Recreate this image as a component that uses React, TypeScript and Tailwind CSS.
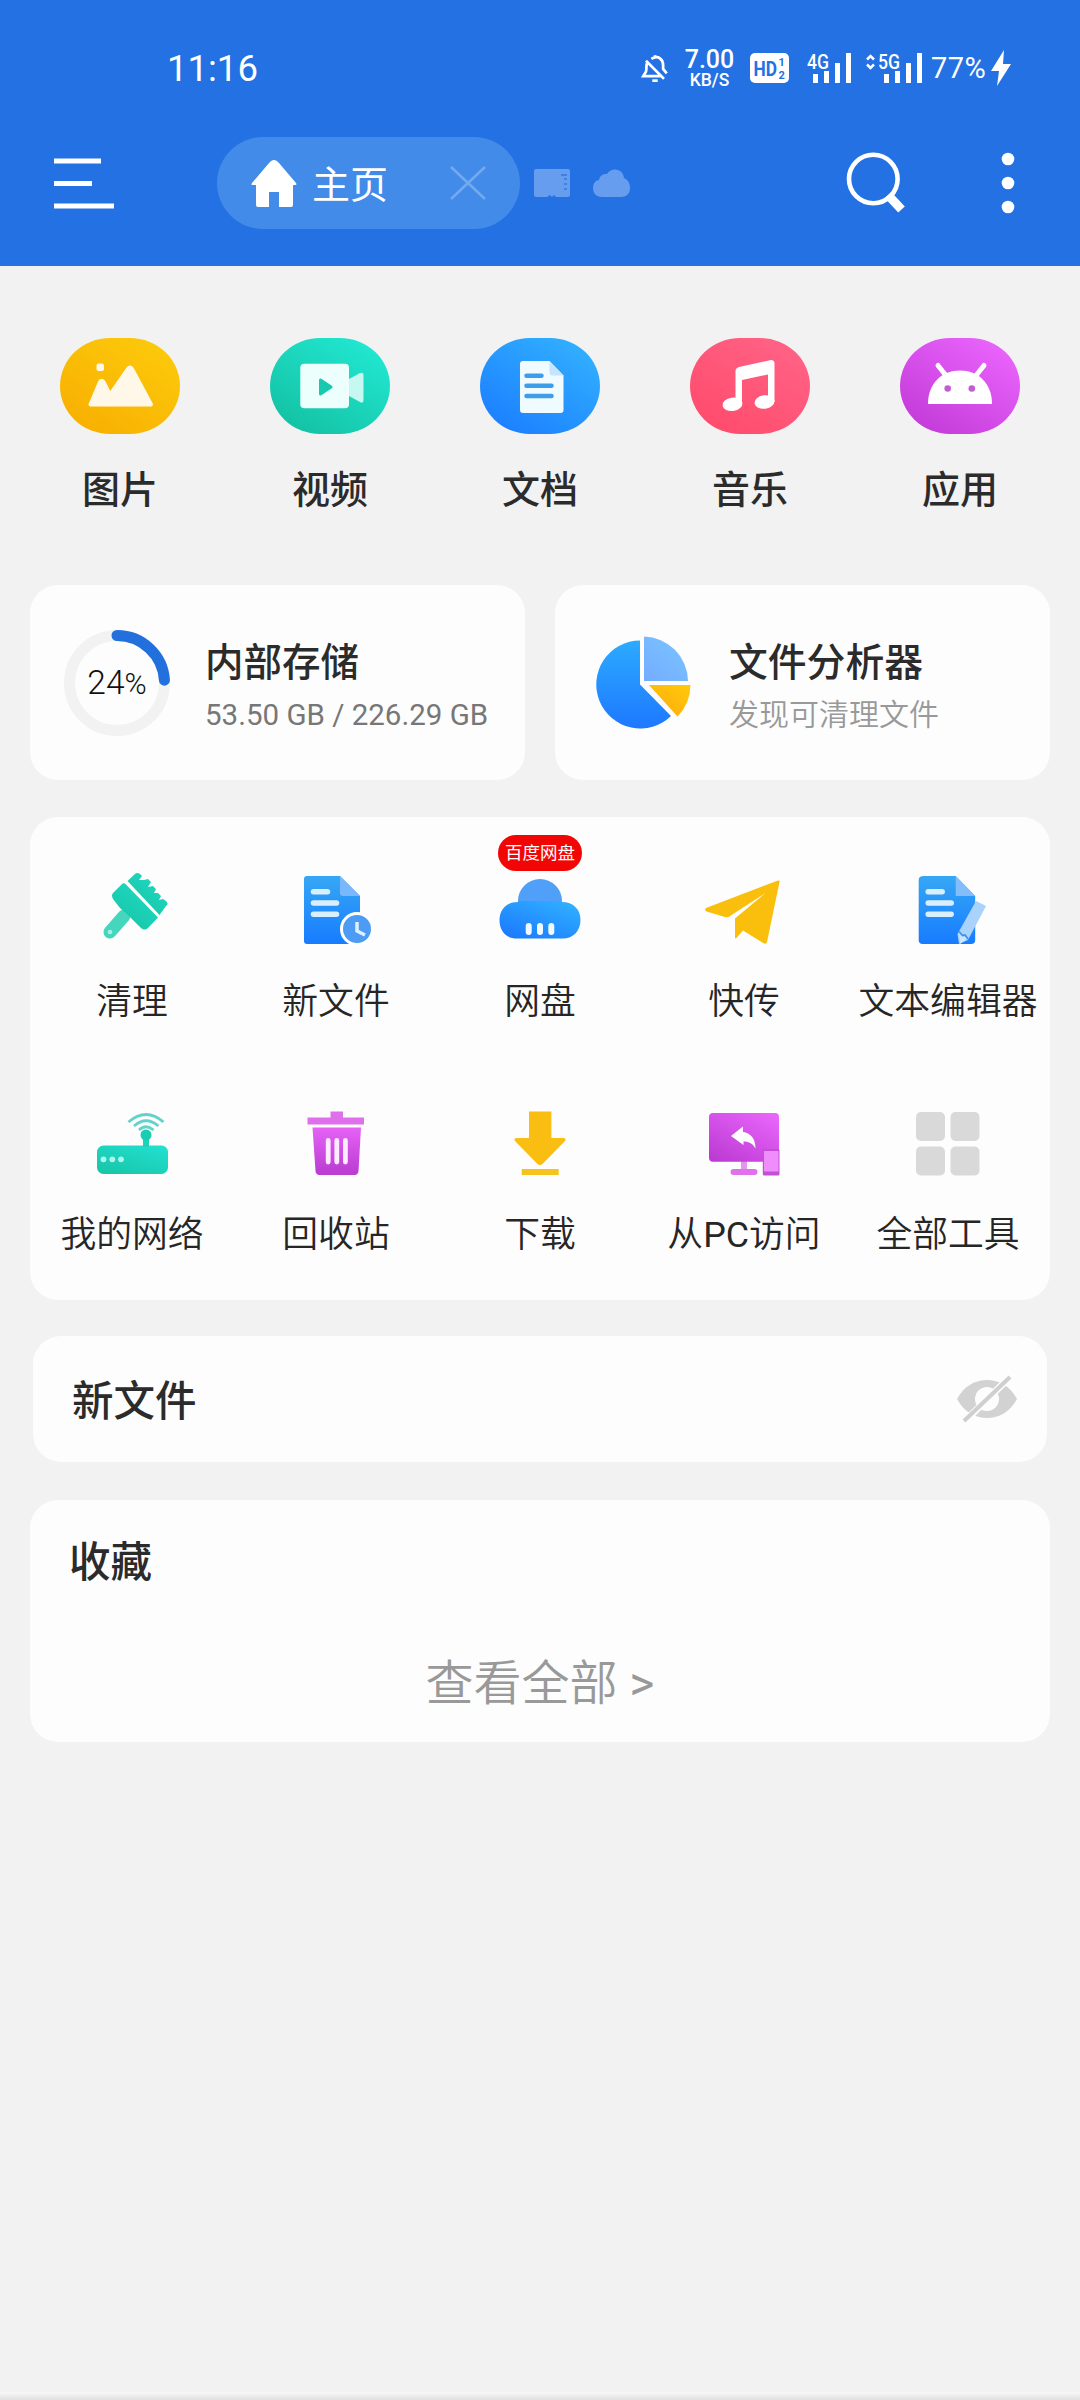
import type { ReactNode } from 'react';
import clsx from 'clsx';

function Gradient({ id, from, to, vertical }: { id: string; from: string; to: string; vertical?: boolean }) {
  return (
    <linearGradient id={id} x1={vertical ? '0.5' : '0.1'} y1={vertical ? '0' : '1'} x2={vertical ? '0.5' : '0.9'} y2={vertical ? '1' : '0'}>
      <stop offset="0" stopColor={from} />
      <stop offset="1" stopColor={to} />
    </linearGradient>
  );
}

function Bars({ x }: { x: number }) {
  return (
    <g fill="#fff">
      <rect x={x} y="24" width="5" height="9" />
      <rect x={x + 11} y="21" width="5" height="12" />
      <rect x={x + 22} y="13" width="5" height="20" />
      <rect x={x + 33} y="3" width="5" height="30" />
    </g>
  );
}

function StatusBar() {
  return (
    <div className="flex h-[136px] items-start pt-[50px] text-white">
      <div className="ml-[167px] w-[120px] text-[36.500px] leading-[37px]">11:16</div>
      <div className="ml-[354px] flex h-9 items-center">
        <svg width="28" height="32" viewBox="-1.500 -1.500 31 35" fill="none" stroke="#fff" strokeWidth="3">
          <path d="M10 6c8-5 13 1 13 7v4l4 5M14 5V2M4 8l20 20M5 11c-1 3 0 6-1 9l-3 5h21" />
          <path d="M11 30h6" />
        </svg>
        <div className="ml-[15px] w-[51px] pt-[3px] text-center font-medium">
          <div className="text-[25px] leading-[20px]">7.00</div>
          <div className="text-[17.500px] leading-[20px]">KB/S</div>
        </div>
        <svg className="ml-[15px]" width="39" height="30" viewBox="0 0 39 30">
          <rect width="39" height="30" rx="5" fill="#fff" />
          <g fill="#2371e3" fontWeight="700">
            <text x="3.500" y="22.500" fontSize="20" textLength="23.500" lengthAdjust="spacingAndGlyphs">HD</text>
            <text x="28.500" y="13" fontSize="11">1</text>
            <text x="28.500" y="26" fontSize="11">2</text>
          </g>
        </svg>
        <svg className="ml-[17px]" width="46" height="36" viewBox="0 0 46 36">
          <text x="1" y="19" fontSize="20.500" fontWeight="500" fill="#fff" textLength="22" lengthAdjust="spacingAndGlyphs">4G</text>
          <Bars x={7} />
        </svg>
        <svg className="ml-[13px]" width="58" height="36" viewBox="0 0 58 36">
          <path d="M2 9.500L5.500 6 9 9.500M2 14.500L5.500 18 9 14.500" fill="none" stroke="#fff" strokeWidth="2.500" />
          <text x="13" y="19" fontSize="20.500" fontWeight="500" fill="#fff" textLength="22" lengthAdjust="spacingAndGlyphs">5G</text>
          <Bars x={19} />
        </svg>
        <div className="ml-2 w-14 text-[29px] leading-9 tracking-[0.4px]">77%</div>
        <svg className="ml-1" width="20" height="36" viewBox="0 0 20 36">
          <path d="M13 0L0 21h8L6 36 20 14h-8z" fill="#fff" />
        </svg>
      </div>
    </div>
  );
}

function Toolbar() {
  return (
    <div className="flex h-[94px] items-center">
      <svg className="ml-[53px]" width="62" height="52" viewBox="0 0 62 52" stroke="#fff" strokeWidth="4.800">
        <path d="M1 4h47M1 26.500h38M1 49h60" />
      </svg>
      <div className="ml-[102px] flex h-[92px] w-[303px] items-center rounded-full bg-[#438be9]">
        <svg className="ml-[34px]" width="46" height="47" viewBox="0 0 46 47" fill="#fff">
          <path d="M23 0c2 0 3 1 5 3l17 20c1 2 0 2-1 2h-2v20q0 2-2 2H28V32H18v15H7q-2 0-2-2V25H2c-1 0-2 0-1-2L18 3c2-2 3-3 5-3z" />
        </svg>
        <span className="ml-[15px] pt-[3px] text-[38px] leading-[46px] text-white">主页</span>
        <svg className="ml-[62px]" width="36" height="34" viewBox="0 0 36 34" stroke="#73a9f0" strokeWidth="2.600">
          <path d="M1 1l34 32M35 1L1 33" />
        </svg>
      </div>
      <svg className="ml-[13px]" width="38" height="30" viewBox="0 0 38 30">
        <path d="M3 1h32q2 0 2 2v24q0 2-2 2H23l-2-2-2 2-2-2-3 2H3q-2 0-2-2V3q0-2 2-2z" fill="#669dee" />
        <path d="M28 7h6M31 11h3M31 16h3M31 21h3" stroke="#3f82e4" strokeWidth="2.200" />
      </svg>
      <svg className="ml-[21px]" width="38" height="30" viewBox="0 0 38 30">
        <path d="M10 29C4 29 1 25 1 20c0-5 3-8 6-8C8 7 11 6 15 6c4-7 16-6 17 4 4 2 6 5 6 10 0 6-4 9-9 9z" fill="#669dee" />
      </svg>
      <svg className="ml-[216px]" width="62" height="62" viewBox="0 0 62 62" fill="none" stroke="#fff">
        <circle cx="27.300" cy="27" r="24.300" strokeWidth="4.600" />
        <path d="M42 43L55.500 57.500" strokeWidth="9" />
      </svg>
      <svg className="ml-[93px]" width="14" height="62" viewBox="0 0 14 62" fill="#fff">
        <circle cx="7" cy="7" r="6.300" />
        <circle cx="7" cy="31" r="6.300" />
        <circle cx="7" cy="55" r="6.300" />
      </svg>
    </div>
  );
}

const categories: { name: string; from: string; to: string; icon: ReactNode }[] = [
  {
    name: '图片',
    from: '#f8ae00',
    to: '#fccb0c',
    icon: (
      <g fill="#fff8e8" stroke="#fff8e8" strokeWidth="4" strokeLinejoin="round">
        <rect x="38.500" y="27.500" width="3.500" height="3.500" />
        <path d="M30.500 66.500L40 44q1.500-2.500 3.500 0L50 57 68 31q2-3 4 0l19 35.500z" />
      </g>
    ),
  },
  {
    name: '视频',
    from: '#13bfa0',
    to: '#22ead5',
    icon: (
      <>
        <path d="M79 41l11-6q3.500-1 3.500 2v25q0 4-3.500 2l-11-6z" fill="#c5f8f1" />
        <rect x="30.300" y="25.700" width="48.700" height="44.500" rx="4" fill="#edfffd" />
        <path d="M50.500 42v14l10.500-7z" fill="#17c9ae" stroke="#17c9ae" strokeWidth="3" strokeLinejoin="round" />
      </>
    ),
  },
  {
    name: '文档',
    from: '#1a7cff',
    to: '#33b3ff',
    icon: (
      <>
        <path d="M43 23h26.500l14 14.500V72q0 3-3 3H43q-3 0-3-3V26q0-3 3-3z" fill="#f0fbff" />
        <path d="M69.500 23l14 14.500h-11q-3 0-3-3z" fill="#c4e4ff" />
        <path d="M46.500 37.700h15M46.500 47.800h25M46.500 58h25" stroke="#3d9de8" strokeWidth="4.500" strokeLinecap="round" />
      </>
    ),
  },
  {
    name: '音乐',
    from: '#ff4a6a',
    to: '#ff6488',
    icon: (
      <g fill="#fff">
        <path d="M49 29l32-7q3.500 0 3.500 3.500V64H78V36.500L52 42v24h-6.500V33q0-3 3.500-4z" />
        <ellipse cx="42.500" cy="66.300" rx="10" ry="6.700" transform="rotate(-8 42.500 66.300)" />
        <ellipse cx="74.500" cy="64" rx="10" ry="6.700" transform="rotate(-8 74.500 64)" />
      </g>
    ),
  },
  {
    name: '应用',
    from: '#c139d6',
    to: '#ec66ff',
    icon: (
      <>
        <path d="M28 66c0-21 14-33.500 32-33.500S92 45 92 66z" fill="#fff" />
        <path d="M38 27.500l8 10M84 27.500l-8 10" stroke="#fff" strokeWidth="5" strokeLinecap="round" />
        <circle cx="47.700" cy="50.500" r="3.300" fill="#c45cd4" />
        <circle cx="71.800" cy="50.500" r="3.300" fill="#c45cd4" />
      </>
    ),
  },
];

function DocLines() {
  return (
    <path d="M25.500 29.700h14M25.500 41h23M25.500 52.300h23" stroke="#d9efff" strokeWidth="5.500" strokeLinecap="round" />
  );
}

const tools: { name: string; label?: ReactNode; badge?: string; icon: ReactNode }[] = [
  {
    name: '清理',
    icon: (
      <>
        <Gradient id="brush" from="#18c2a5" to="#1fdcc4" />
        <path d="M40 54L26 70" stroke="#45d6be" strokeWidth="13" strokeLinecap="round" />
        <path d="M38 22q2-1.500 4 .5l32 33-10 10.500q-3.500 3-7 0L50 59l-6-6-8-7-7-9q-2-4 0-6z" fill="url(#brush)" />
        <path d="M43.500 19l7.500-7q2-2 5 0l2 2-3 4 5 0 4-1 3 3-3 5 5-1 3 3-2 4 4 0 3 3-2 4 4-1 3 2q3 3 0 5l-6.500 9z" fill="url(#brush)" />
        <circle cx="26" cy="70" r="2.300" fill="#a6efe2" />
      </>
    ),
  },
  {
    name: '新文件',
    icon: (
      <>
        <Gradient id="recent" from="#36a7f5" to="#177cff" vertical />
        <path d="M19 14h33l20 20v48H19q-3 0-3-3V17q0-3 3-3z" fill="url(#recent)" />
        <path d="M52 14l20 20H55q-3 0-3-3z" fill="#79b8fa" />
        <DocLines />
        <circle cx="69" cy="67" r="15.500" fill="#4c9bf5" stroke="#fff" strokeWidth="3" />
        <path d="M69 60v9l8 4" fill="none" stroke="#dff1ff" strokeWidth="3.500" />
      </>
    ),
  },
  {
    name: '网盘',
    badge: '百度网盘',
    icon: (
      <>
        <Gradient id="cloud" from="#1b78ff" to="#30b2ff" />
        <circle cx="48" cy="39" r="22" fill="#509ff8" />
        <path d="M26 39h44v1c11 0 18.500 7 18.500 18S81 76.500 71 76.500H25C14 76.500 7.500 69 7.500 58S15 40 26 40z" fill="url(#cloud)" />
        <path d="M36.700 64v6M48 64v6M59.300 64v6" stroke="#effaff" strokeWidth="6" strokeLinecap="round" />
      </>
    ),
  },
  {
    name: '快传',
    icon: (
      <path
        d="M10 46L82 18.500q2-.5 1.500 1.500L71 80q-.8 2.500-3 1.500L47 68.500 40 76.500q-1 0-1-1V56.500L69.500 31 34 54q-2 2-5 1L10.500 49.500q-2.500-1.500-.5-3.500z"
        fill="#fabf0c"
      />
    ),
  },
  {
    name: '文本编辑器',
    icon: (
      <>
        <Gradient id="editor" from="#36a7f5" to="#177cff" vertical />
        <g transform="translate(2.700 0)">
          <path d="M21 14h32l19.500 20v44q0 4-4 4H20q-4 0-4-4V18q0-4 5-4z" fill="url(#editor)" />
          <path d="M53 14l19.500 20H53z" fill="#84bdfb" />
          <DocLines />
        </g>
        <path d="M76 39l10 5-18 34-9 4-1.500-10z" fill="#a9d2fc" />
        <path d="M59 70l9 6-8 6z" fill="#cde5fd" />
        <path d="M59 69.500l3.500 4 2.500-.5 3 4" fill="none" stroke="#3f93ee" strokeWidth="1.800" />
      </>
    ),
  },
  {
    name: '我的网络',
    icon: (
      <>
        <Gradient id="router" from="#18c5a8" to="#22e0d0" />
        <rect x="13" y="50.500" width="71" height="28.500" rx="6.500" fill="url(#router)" />
        <path d="M62 40v12" stroke="#1fd3bb" strokeWidth="6" />
        <circle cx="62" cy="40" r="5.500" fill="#17cdb2" />
        <g fill="none" stroke="#62d3ca" strokeWidth="2.800">
          <path d="M44.500 27q17.500-15 35 0M50 31q12-10.500 24.500 0M55 35q7-6.500 14.500 0" />
        </g>
        <g fill="#aef5ec">
          <circle cx="19.500" cy="64.300" r="2.900" />
          <circle cx="28.300" cy="64.300" r="2.900" />
          <circle cx="37" cy="64.300" r="2.900" />
        </g>
      </>
    ),
  },
  {
    name: '回收站',
    icon: (
      <>
        <Gradient id="trash" from="#e662f7" to="#b93bcf" vertical />
        <path d="M42.500 16.500H55v6h21v7H19.500v-7h23z" fill="#df70ec" />
        <path d="M24.500 32.500H73L70.500 76q-.5 4-4 4h-35q-3.500 0-4-4z" fill="url(#trash)" />
        <path d="M40.200 45.500v21.500M48.800 45.500v21.500M57.400 45.500v21.500" stroke="#fdebff" strokeWidth="4.800" strokeLinecap="round" />
      </>
    ),
  },
  {
    name: '下载',
    icon: (
      <>
        <path d="M37 16.500h22.400V43H72q2.500.5 1 3L51 68.500q-3 3-6 0L23 46q-1.500-2.500 1-3h13z" fill="#fabe12" />
        <path d="M29.700 77h37" stroke="#f6c21c" strokeWidth="6" />
      </>
    ),
  },
  {
    name: '从PC访问',
    label: (
      <>
        从<span className="font-normal">PC</span>访问
      </>
    ),
    icon: (
      <>
        <Gradient id="screen" from="#bb3ad2" to="#e966fb" />
        <path d="M48 66v10" stroke="#e495ee" strokeWidth="6" />
        <rect x="34.500" y="74" width="27" height="6" rx="3" fill="#df72ec" />
        <rect x="13" y="18" width="70" height="48.700" rx="4" fill="url(#screen)" />
        <path d="M35 41l12-9.500v5.500c8 1 12.500 7 12.500 16.500-3-5-6-7-12-7v3.500z" fill="#fff" />
        <rect x="66.800" y="54" width="16.700" height="26.500" rx="1.500" fill="#c44fd6" />
        <rect x="68" y="56" width="14.500" height="20.500" fill="#ef8dfb" />
      </>
    ),
  },
  {
    name: '全部工具',
    icon: (
      <g fill="#d9d9d9">
        <rect x="16" y="17" width="29" height="29" rx="5" />
        <rect x="50.500" y="17" width="29" height="29" rx="5" />
        <rect x="16" y="51.500" width="29" height="29" rx="5" />
        <rect x="50.500" y="51.500" width="29" height="29" rx="5" />
      </g>
    ),
  },
];

function Card({ className, children }: { className?: string; children: ReactNode }) {
  return <section className={clsx('rounded-[28px] bg-[#fdfdfd]', className)}>{children}</section>;
}

function StorageCard() {
  const length = 2 * Math.PI * 47.5;

  return (
    <Card className="flex h-[195px] items-center pl-[34px]">
      <div className="relative size-[106px]">
        <svg width="106" height="106" viewBox="0 0 106 106" fill="none" strokeWidth="11">
          <circle cx="53" cy="53" r="47.500" stroke="#f2f2f2" />
          <circle
            cx="53"
            cy="53"
            r="47.500"
            stroke="#2270de"
            strokeLinecap="round"
            strokeDasharray={`${length * 0.24} ${length}`}
            transform="rotate(-90 53 53)"
          />
        </svg>
        <div className="absolute inset-0 flex items-baseline justify-center pt-[34px] text-[33.500px] leading-[38px] font-light text-[#111]">
          24<span className="text-[30px]">%</span>
        </div>
      </div>
      <div className="ml-[35px] pt-[12px]">
        <h2 className="text-[38.500px] leading-[48px] font-medium text-[#2b2b2b]">内部存储</h2>
        <p className="mt-1 text-[29.500px] leading-[48px] whitespace-nowrap text-[#777]">53.50 GB / 226.29 GB</p>
      </div>
    </Card>
  );
}

function AnalyzerCard() {
  return (
    <Card className="flex h-[195px] items-center pl-[40px]">
      <svg width="96" height="96" viewBox="0 0 96 96">
        <Gradient id="pie" from="#2cabff" to="#1e78ff" vertical />
        <Gradient id="slice" from="#74adff" to="#7ac4ff" />
        <Gradient id="wedge" from="#ffa90f" to="#ffc90a" />
        <path d="M45 49.500V5.500a44 44 0 1 0 31 75.500z" fill="url(#pie)" />
        <path d="M49 46V1.500a45 45 0 0 1 44 44.500z" fill="url(#slice)" />
        <path d="M54 50h41.500a46 46 0 0 1-13 31.500z" fill="url(#wedge)" />
      </svg>
      <div className="ml-[38px] pt-[12px]">
        <h2 className="text-[38.800px] leading-[48px] font-medium text-[#2b2b2b]">文件分析器</h2>
        <p className="mt-1 text-[30px] leading-[48px] font-[350] text-[#999]">发现可清理文件</p>
      </div>
    </Card>
  );
}

export default function App() {
  return (
    <div className="flex h-[2400px] w-[1080px] flex-col overflow-hidden bg-[#f2f2f2] font-['Roboto','Noto_Sans_CJK_SC',sans-serif]">
      <header className="h-[266px] bg-[#2371e3]">
        <StatusBar />
        <Toolbar />
      </header>

      <nav className="mt-[72px] grid grid-cols-5 px-[15px]">
        {categories.map((category, i) => (
          <div key={category.name} className="flex flex-col items-center">
            <svg width="120" height="96" viewBox="0 0 120 96">
              <Gradient id={`category-${i}`} from={category.from} to={category.to} />
              <rect width="120" height="96" rx="50" ry="48" fill={`url(#category-${i})`} />
              {category.icon}
            </svg>
            <span className="mt-[32px] text-[38px] leading-[48px] font-medium text-[#2b2b2b]">{category.name}</span>
          </div>
        ))}
      </nav>

      <main className="px-[30px]">
        <div className="mt-[71px] grid grid-cols-2 gap-[30px]">
          <StorageCard />
          <AnalyzerCard />
        </div>

        <Card className="mt-[37px] grid h-[483px] grid-cols-5 grid-rows-[233px_1fr] pt-[45px]">
          {tools.map(tool => (
            <div key={tool.name} className="relative flex flex-col items-center">
              {tool.badge && (
                <span className="absolute -top-[27px] flex h-9 w-[84px] items-center justify-center rounded-full bg-[#f20505] pt-px text-[17.500px] leading-none text-white">
                  {tool.badge}
                </span>
              )}
              <svg width="96" height="96" viewBox="0 0 96 96">
                {tool.icon}
              </svg>
              <span className="mt-[21px] text-[35.800px] leading-[46px] whitespace-nowrap font-[350] text-[#262626]">
                {tool.label ?? tool.name}
              </span>
            </div>
          ))}
        </Card>

        <Card className="mx-[3px] mt-9 flex h-[126px] items-center justify-between pr-[29px] pl-[39px]">
          <h2 className="pt-[5px] text-[41.500px] leading-[52px] font-medium text-[#2b2b2b]">新文件</h2>
          <svg width="62" height="48" viewBox="0 0 62 48">
            <path d="M1 24C8 11 19 5 31 5s23 6 30 19c-7 13-18 19-30 19S8 37 1 24z" fill="#d2d2d2" />
            <circle cx="31" cy="24" r="12" fill="#fdfdfd" />
            <path d="M9 46L54 2" stroke="#fdfdfd" strokeWidth="7" />
            <path d="M8 46L54 2" stroke="#cfcfcf" strokeWidth="4" />
          </svg>
        </Card>

        <Card className="mt-[38px] h-[242px] pt-[37px]">
          <h2 className="pl-[39px] text-[41.500px] leading-[52px] font-medium text-[#2b2b2b]">收藏</h2>
          <p className="mt-[65px] text-center text-[48px] leading-[60px] font-[350] text-[#999]">
            查看全部 <span className="font-normal">&gt;</span>
          </p>
        </Card>
      </main>

      <div className="mt-auto h-2 bg-linear-to-b from-[#f8f8f8] to-[#e0e0e0]" />
    </div>
  );
}
